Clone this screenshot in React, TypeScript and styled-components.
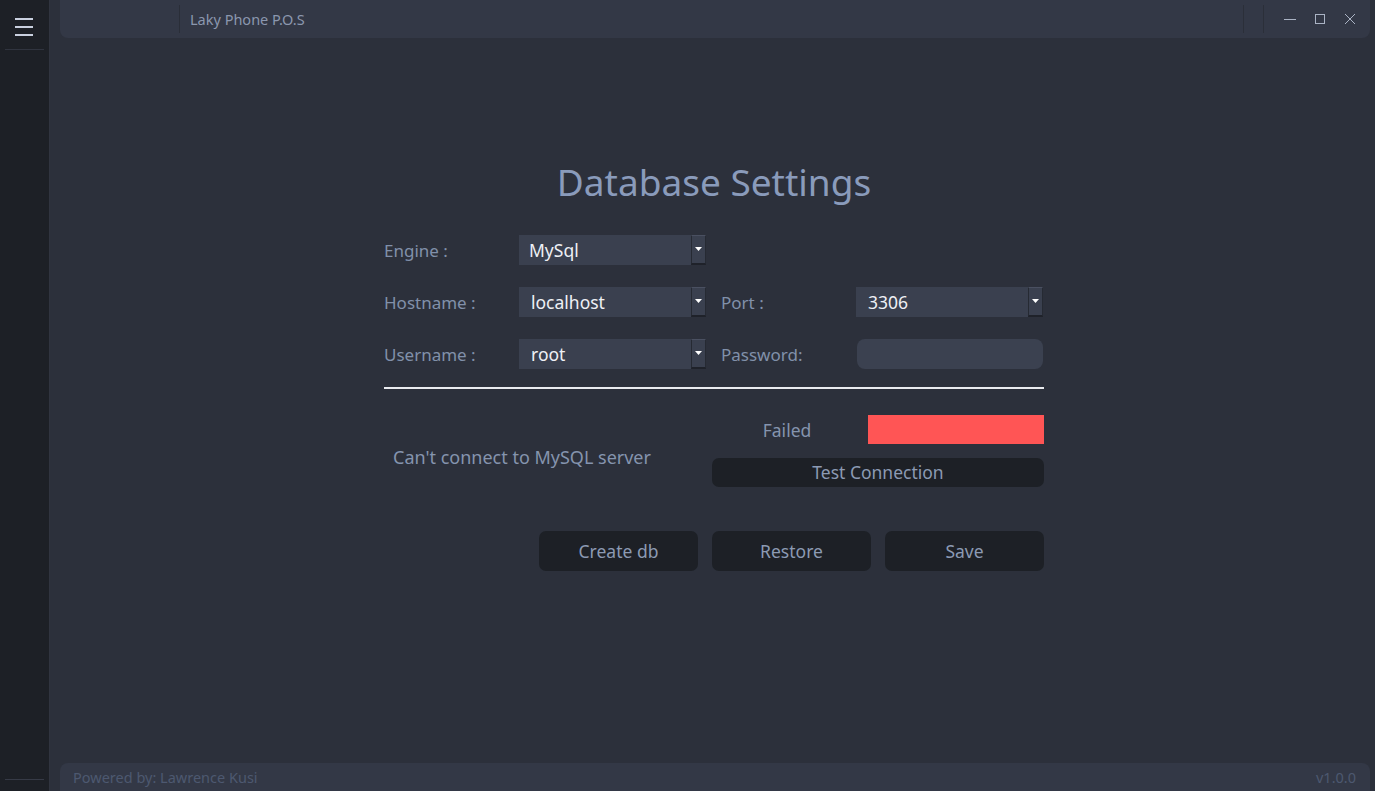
import React from 'react';
import styled, { createGlobalStyle } from 'styled-components';

const GlobalStyle = createGlobalStyle`
    html, body, #root {
        margin: 0;
        padding: 0;
        height: 100%;
    }
    body {
        background: #2c303b;
        font-family: "Noto Sans", "Open Sans", sans-serif;
        overflow: hidden;
    }
`

function App() {
    return (
        <>
            <GlobalStyle />
            <Window>
                <Sidebar>
                    <MenuButton>
                        <svg width="20" height="20" viewBox="0 0 20 20">
                            <rect x="1" y="0" width="18" height="2" fill="#c9d0df" />
                            <rect x="1" y="8" width="18" height="2" fill="#c9d0df" />
                            <rect x="1" y="16" width="18" height="2" fill="#c9d0df" />
                        </svg>
                    </MenuButton>
                    <SideSpacer />
                    <SideFooter />
                </Sidebar>
                <Main>
                    <TitleBar>
                        <TitleLeft />
                        <AppName>Laky Phone P.O.S</AppName>
                        <TitleSpacer />
                        <BarSep width={20} />
                        <BarSep width={12} />
                        <WinControls>
                            <WinButton>
                                <svg width="14" height="14" viewBox="0 0 14 14">
                                    <line x1="1" y1="7.5" x2="13" y2="7.5" stroke="#aab3c4" strokeWidth="1" />
                                </svg>
                            </WinButton>
                            <WinButton>
                                <svg width="14" height="14" viewBox="0 0 14 14">
                                    <rect x="2.5" y="2.5" width="9" height="9" fill="none" stroke="#aab3c4" strokeWidth="1" />
                                </svg>
                            </WinButton>
                            <WinButton>
                                <svg width="14" height="14" viewBox="0 0 14 14">
                                    <path d="M2 2 L12 12 M12 2 L2 12" stroke="#aab3c4" strokeWidth="1" />
                                </svg>
                            </WinButton>
                        </WinControls>
                    </TitleBar>

                    <Content>
                        <Heading>Database Settings</Heading>
                        <FormGrid>
                            <Label>Engine :</Label>
                            <Combo value="MySql" />
                            <span />
                            <span />

                            <Label>Hostname :</Label>
                            <Combo value="localhost" inset />
                            <Label>Port :</Label>
                            <Combo value="3306" inset />

                            <Label>Username :</Label>
                            <Combo value="root" inset />
                            <Label>Password:</Label>
                            <PasswordBox />
                        </FormGrid>
                        <Rule />
                        <StatusGrid>
                            <ErrorText>Can't connect to MySQL server</ErrorText>
                            <StatusRow>
                                <StatusLabel>Failed</StatusLabel>
                                <StatusLight />
                            </StatusRow>
                            <TestButton>Test Connection</TestButton>
                        </StatusGrid>
                        <Actions>
                            <ActionButton>Create db</ActionButton>
                            <ActionButton>Restore</ActionButton>
                            <ActionButton>Save</ActionButton>
                        </Actions>
                    </Content>

                    <Footer>
                        <FooterText>Powered by: Lawrence Kusi</FooterText>
                        <FooterText>v1.0.0</FooterText>
                    </Footer>
                </Main>
            </Window>
        </>
    );
}

function Combo({ value, inset }: { value: string, inset?: boolean }) {
    return (
        <ComboBox>
            <ComboValue inset={inset ? 1 : 0}>{value}</ComboValue>
            <ComboArrow>
                <svg width="7" height="4" viewBox="0 0 7 4">
                    <path d="M0 0 L7 0 L3.5 4 Z" fill="#ffffff" />
                </svg>
            </ComboArrow>
        </ComboBox>
    )
}

const Window = styled.div`
    display: flex;
    height: 100vh;
    width: 100vw;
`

const Sidebar = styled.div`
    width: 50px;
    flex-shrink: 0;
    background: #1d2026;
    display: flex;
    flex-direction: column;
    border-right: 1px solid #30343f;
    box-sizing: border-box;
`

const MenuButton = styled.div`
    height: 50px;
    display: flex;
    align-items: center;
    justify-content: center;
    margin: 0 5px;
    border-bottom: 1px solid #30343f;
    box-sizing: border-box;
    svg {
        margin-top: 6px;
        margin-left: -2px;
    }
`

const SideSpacer = styled.div`
    flex: 1;
`

const SideFooter = styled.div`
    height: 11px;
    margin: 0 5px;
    border-top: 1px solid #363a46;
`

const Main = styled.div`
    flex: 1;
    display: flex;
    flex-direction: column;
    padding: 0 5px 0 10px;
    min-width: 0;
`

const TitleBar = styled.div`
    height: 38px;
    flex-shrink: 0;
    background: #333846;
    border-radius: 0 0 8px 8px;
    display: flex;
    align-items: center;
`

const TitleLeft = styled.div`
    width: 119px;
    height: 28px;
    border-right: 1px solid #2a2e38;
`

const AppName = styled.div`
    margin-left: 10px;
    font-size: 14.5px;
    color: #8b97ae;
`

const TitleSpacer = styled.div`
    flex: 1;
`

const BarSep = styled.div<{ width: number }>`
    width: ${props => props.width}px;
    height: 28px;
    border-left: 1px solid #2b2f39;
    box-sizing: border-box;
`

const WinControls = styled.div`
    display: flex;
    align-items: center;
    padding-right: 5px;
`

const WinButton = styled.div`
    width: 30px;
    height: 30px;
    display: flex;
    align-items: center;
    justify-content: center;
`

const Content = styled.div`
    flex: 1;
    display: flex;
    flex-direction: column;
    align-items: center;
    padding-right: 2px;
`

const Heading = styled.h1`
    margin: 118px 0 0 0;
    font-weight: 400;
    font-size: 37px;
    line-height: 52px;
    color: #8a9bbb;
`

const FormGrid = styled.div`
    margin-top: 27px;
    width: 660px;
    display: grid;
    grid-template-columns: 135px 187px 15px 135px 187px;
    grid-template-rows: repeat(3, 30px);
    row-gap: 22px;
    & > :nth-child(4n + 3) {
        grid-column: 4;
    }
`

const Label = styled.div`
    font-size: 17px;
    color: #8190aa;
    display: flex;
    align-items: center;
`

const ComboBox = styled.div`
    display: flex;
    background: #3a404f;
    height: 30px;
`

const ComboValue = styled.div<{ inset: number }>`
    flex: 1;
    display: flex;
    align-items: center;
    padding-left: ${props => props.inset ? 12 : 10}px;
    font-size: 17.5px;
    color: #eef0f5;
`

const ComboArrow = styled.div`
    width: 15px;
    display: flex;
    align-items: center;
    justify-content: center;
    background: #3a404f;
    border-left: 1px solid #262a33;
    border-bottom: 2px solid #1f222a;
    border-right: 1px solid #262a33;
    border-top: 1px solid #4a5061;
    box-sizing: border-box;
    svg {
        margin-top: -1px;
    }
`

const PasswordBox = styled.div`
    grid-column: 5;
    margin-left: 1px;
    background: #3b4150;
    border-radius: 8px;
    height: 30px;
`

const Rule = styled.div`
    width: 660px;
    height: 2px;
    margin-top: 18px;
    background: #e9ebef;
`

const StatusGrid = styled.div`
    width: 660px;
    margin-top: 26px;
    display: grid;
    grid-template-columns: 328px 332px;
    grid-template-rows: 29px 29px;
    row-gap: 14px;
`

const ErrorText = styled.div`
    grid-row: 1 / span 2;
    padding-left: 9px;
    padding-top: 12px;
    display: flex;
    align-items: center;
    font-size: 18px;
    color: #8594ae;
`

const StatusRow = styled.div`
    display: flex;
    align-items: center;
`

const StatusLabel = styled.div`
    width: 150px;
    text-align: center;
    font-size: 17.5px;
    color: #8594ae;
`

const StatusLight = styled.div`
    margin-left: 6px;
    width: 176px;
    height: 29px;
    background: #ff5555;
`

const TestButton = styled.button`
    grid-column: 2;
    border: none;
    border-radius: 7px;
    background: #1d2026;
    color: #8c9ab3;
    font-family: inherit;
    font-size: 17.5px;
    padding: 0;
    line-height: 29px;
`

const Actions = styled.div`
    width: 660px;
    margin-top: 44px;
    display: flex;
    justify-content: flex-end;
    gap: 14px;
`

const ActionButton = styled.button`
    width: 159px;
    height: 40px;
    border: none;
    border-radius: 7px;
    background: #1d2026;
    color: #8c9ab3;
    font-family: inherit;
    font-size: 17.5px;
    padding: 0;
`

const Footer = styled.div`
    height: 28px;
    flex-shrink: 0;
    background: #333846;
    border-radius: 8px 8px 0 0;
    display: flex;
    align-items: center;
    justify-content: space-between;
    padding: 0 14px 0 13px;
`

const FooterText = styled.div`
    font-size: 14.5px;
    color: #4d5870;
`

export default App;
